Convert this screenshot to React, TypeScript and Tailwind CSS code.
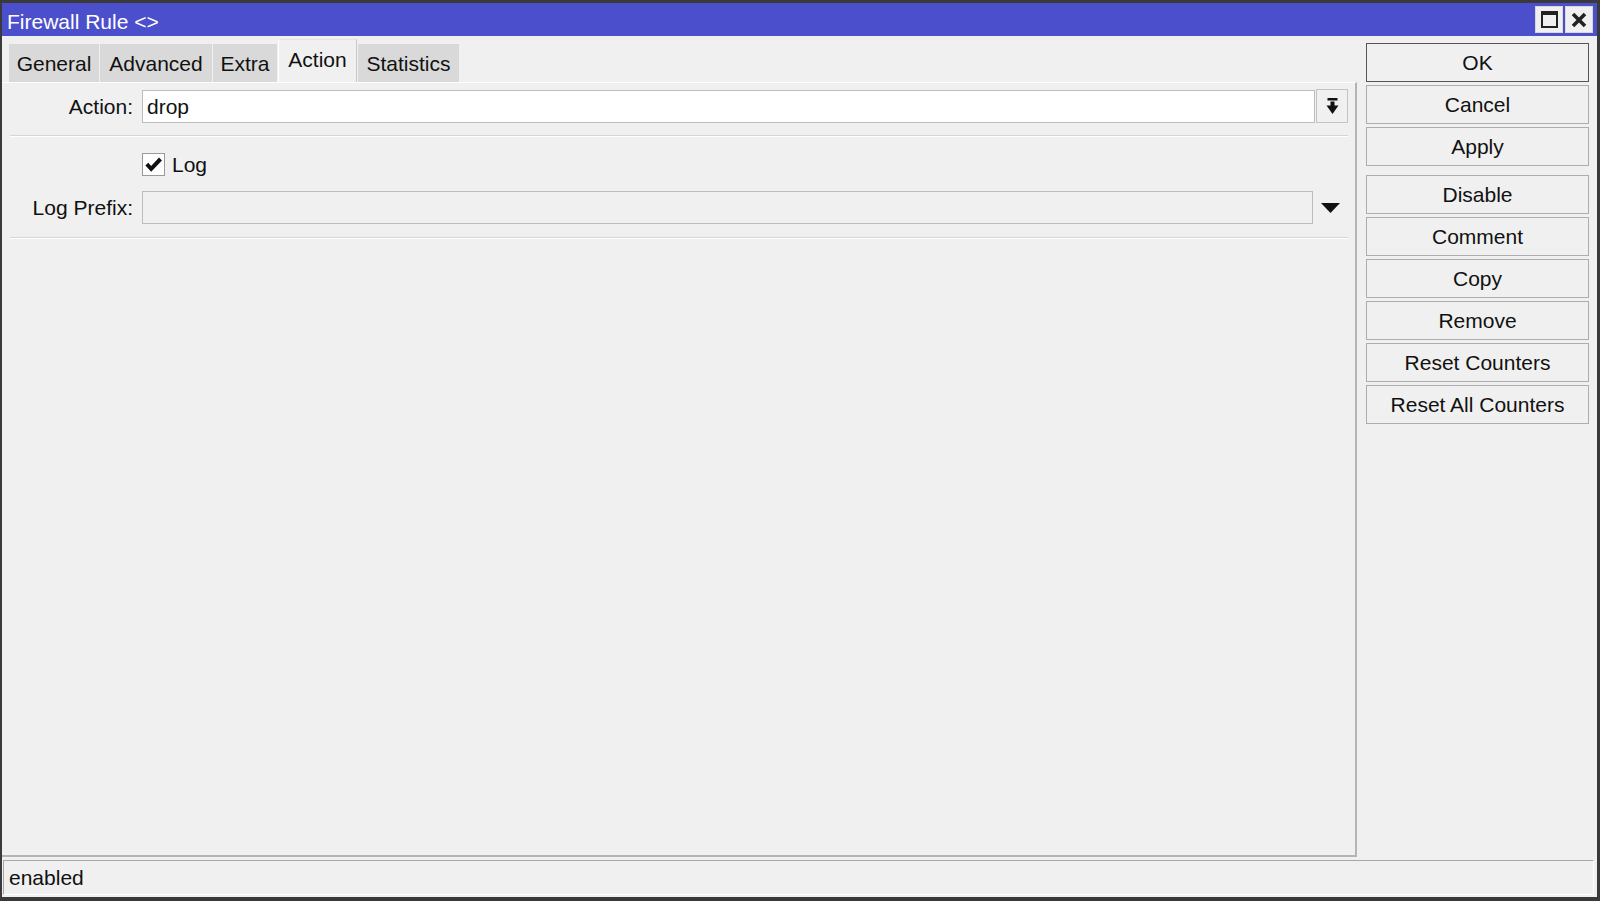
import React from 'react'

const tabs: [string, number][] = [
  ['General', 90],
  ['Advanced', 112],
  ['Extra', 64],
  ['Action', 79],
  ['Statistics', 101],
]
const groupA = ['OK', 'Cancel', 'Apply']
const groupB = ['Disable', 'Comment', 'Copy', 'Remove', 'Reset Counters', 'Reset All Counters']

function SideButton({ label, primary }: { label: string; primary?: boolean }) {
  return (
    <button
      className={`h-[39px] w-full bg-[#f0f0f0] text-[21px] leading-none text-[#111] flex items-center justify-center ${
        primary ? 'border border-[#555]' : 'border border-[#adadad]'
      }`}
    >
      {label}
    </button>
  )
}

export default function App() {
  return (
    <div className="w-[1600px] h-[901px] flex flex-col bg-[#f0f0f0] border-t-[3px] border-l-[2px] border-r-[3px] border-b-[4px] border-[#3a3a3a] font-['Liberation_Sans',Arial,sans-serif] text-[#111] overflow-hidden">
      {/* title bar */}
      <div className="h-[33px] shrink-0 bg-[#4c4fcb] flex items-center pl-[5px] pr-[4px]">
        <span className="text-white text-[21px] leading-none pt-[4px]">Firewall Rule &lt;&gt;</span>
        <div className="ml-auto flex gap-[2px]">
          <div className="w-[28px] h-[27px] bg-[#f0f0f0] border border-[#d8d8d8] flex items-center justify-center">
            <div className="w-[17px] h-[17px] border-[2px] border-t-[4px] border-[#222]" />
          </div>
          <div className="w-[28px] h-[27px] bg-[#f0f0f0] border border-[#d8d8d8] flex items-center justify-center">
            <svg width="16" height="16" viewBox="0 0 16 16">
              <path d="M2 2 L14 14 M14 2 L2 14" stroke="#222" strokeWidth="3.6" />
            </svg>
          </div>
        </div>
      </div>

      {/* body */}
      <div className="flex flex-1 min-h-0">
        <div className="flex flex-col w-[1355px] shrink-0">
          {/* tabs */}
          <div className="h-[46px] shrink-0 flex items-end pl-[7px] gap-[1px]">
            {tabs.map(([t, w]) =>
              t === 'Action' ? (
                <div
                  key={t}
                  style={{ width: w }}
                  className="h-[43px] flex items-center justify-center bg-[#f0f0f0] border-t border-l border-r border-t-[#e4e4e4] border-l-white border-r-[#c8c8c8] text-[21px] leading-none pb-[4px]"
                >
                  {t}
                </div>
              ) : (
                <div
                  key={t}
                  style={{ width: w }}
                  className="h-[38px] flex items-center justify-center bg-[#d9d9d9] text-[21px] leading-none pt-[1px]"
                >
                  {t}
                </div>
              )
            )}
          </div>

          {/* content panel */}
          <div className="flex-1 flex flex-col border-t border-t-white border-r-[2px] border-b-[2px] border-r-[#b4b4b4] border-b-[#b4b4b4] pr-[7px]">
            <div className="flex items-center mt-[6px] h-[34px]">
              <div className="w-[131px] text-right text-[21px] leading-none">Action:</div>
              <div className="ml-[9px] flex-1 h-[33px] bg-white border border-[#bcbcbc] flex items-center pl-[4px] text-[21px] leading-none">
                drop
              </div>
              <div className="ml-[1px] w-[32px] h-[34px] bg-[#f0f0f0] border border-[#c4c4c4] flex items-center justify-center">
                <svg width="13" height="17" viewBox="0 0 13 17">
                  <rect x="1.5" y="0" width="10" height="2.5" fill="#111" />
                  <rect x="4.5" y="3.5" width="4" height="5" fill="#111" />
                  <path d="M0.5 7.5 L12.5 7.5 L6.5 16 Z" fill="#111" />
                </svg>
              </div>
            </div>
            <div className="ml-[8px] mt-[12px] h-[2px] border-t border-t-[#d6d6d6] border-b border-b-white" />

            <div className="flex items-center mt-[16px] h-[22px]">
              <div className="w-[131px]" />
              <div className="ml-[9px] w-[23px] h-[23px] bg-white border border-[#9a9a9a] flex items-center justify-center">
                <svg width="17" height="15" viewBox="0 0 17 15">
                  <path d="M1.8 7.2 L6.2 11.8 L15.5 2" stroke="#111" strokeWidth="4" fill="none" />
                </svg>
              </div>
              <span className="ml-[7px] text-[21px] leading-none">Log</span>
            </div>

            <div className="flex items-center mt-[16px] h-[33px]">
              <div className="w-[131px] text-right text-[21px] leading-none">Log Prefix:</div>
              <div className="ml-[9px] flex-1 h-[33px] bg-[#f0f0f0] border border-[#bcbcbc]" />
              <div className="w-[35px] flex items-center justify-center">
                <svg width="19" height="10" viewBox="0 0 19 10">
                  <path d="M0 0 L19 0 L9.5 10 Z" fill="#111" />
                </svg>
              </div>
            </div>
            <div className="ml-[8px] mt-[13px] h-[2px] border-t border-t-[#d6d6d6] border-b border-b-white" />
          </div>
        </div>

        {/* side buttons */}
        <div className="flex-1 pl-[9px] pr-[8px] pt-[7px] flex flex-col">
          <div className="flex flex-col gap-[3px]">
            {groupA.map(b => (
              <SideButton key={b} label={b} primary={b === 'OK'} />
            ))}
          </div>
          <div className="flex flex-col gap-[3px] mt-[9px]">
            {groupB.map(b => (
              <SideButton key={b} label={b} />
            ))}
          </div>
        </div>
      </div>

      {/* status bar */}
      <div className="h-[40px] shrink-0 pt-[3px] pb-[2px] pl-[1px] pr-[3px]">
        <div className="h-full border-t border-l border-[#a8a8a8] border-b border-r border-b-white border-r-white flex items-center pl-[5px] text-[21px] leading-none">
          enabled
        </div>
      </div>
    </div>
  )
}
